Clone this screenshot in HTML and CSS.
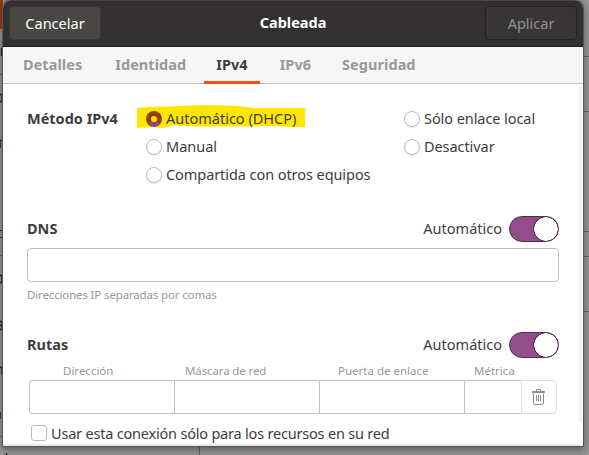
FILE: index.html
```html
<!DOCTYPE html>
<html lang="es">
<head>
<meta charset="utf-8">
<title>Cableada</title>
<link rel="stylesheet" href="styles.css">
</head>
<body>
<svg class="backdrop" width="589" height="455" viewBox="0 0 589 455" aria-hidden="true">
  <rect width="3" height="29" fill="#a23712"/>
  <path d="M0 74.500H3M0 255.500H3M0 436.500H199.500V455M583 56.500H589M583 111.500H589M583 231.500H589M583 256.500H589M583 311.500H589" fill="none" stroke="#666"/>
  <path d="M1.500 48v8M0 94.500h2v7H0M0 140.500h3M0 275.500h2v7H0M0 321.500h2v8H0M0 325.500h2M0 367.500h2v7M6.500 453v2" fill="none" stroke="#17202b" stroke-width="1.300"/>
  <path d="M0 142h1v6H0zM0 412h1v7H0z" fill="#0f4675"/>
  <path d="M2 183h1v10H2z" fill="#702407"/>
  <path d="M0 230h2v1H0zM0 237h2v1H0z" fill="#223a50"/>
</svg>
<main class="dialog">
  <header class="titlebar">
    <button class="btn cancel">Cancelar</button>
    <h1>Cableada</h1>
    <button class="btn apply">Aplicar</button>
  </header>
  <nav class="tabs">
    <a>Detalles</a><a>Identidad</a><a class="active">IPv4</a><a>IPv6</a><a>Seguridad</a>
  </nav>
  <div class="content">
    <section class="method">
      <h2>Método IPv4</h2>
      <div class="options">
        <label><svg class="marker" width="170" height="24" viewBox="0 0 170 24"><path d="M1 4Q15 2 32 2.500Q62 0 94 1.500Q107 2 117 4L169 4V23H153Q136 21.500 116 22.500L62 22.500L37 21.500L26 24Q13 22.500 1 24Z" fill="#ffe600"/></svg><i class="radio on"></i><span>Automático (DHCP)</span></label>
        <label><i class="radio"></i><span>Manual</span></label>
        <label><i class="radio"></i><span class="shared">Compartida con otros equipos</span></label>
      </div>
      <div class="options">
        <label><i class="radio"></i><span class="shared">Sólo enlace local</span></label>
        <label><i class="radio"></i><span class="shared">Desactivar</span></label>
      </div>
    </section>
    <section class="dns">
      <div class="section-head"><h2>DNS</h2><span>Automático</span><i class="switch"></i></div>
      <div class="entry"></div>
      <p class="hint">Direcciones IP separadas por comas</p>
    </section>
    <section class="routes">
      <div class="section-head"><h2>Rutas</h2><span>Automático</span><i class="switch"></i></div>
      <div class="columns"><span>Dirección</span><span class="mask">Máscara de red</span><span>Puerta de enlace</span><span>Métrica</span></div>
      <div class="route-row"><i></i><i></i><i></i><i></i><button class="delete" aria-label="Eliminar"><svg width="13" height="16" viewBox="0 0 13 16"><path d="M4.500 2V.5h4V2M.5 3.500V2.500h12v1z" fill="#8c8c8c" stroke="#8c8c8c"/><path d="M5 1.500h3" stroke="#fff"/><path d="M1.500 4.500V14a1.500 1.500 0 0 0 1.500 1.500h7a1.500 1.500 0 0 0 1.500-1.500V4.500M4.500 6v6M6.500 6v6M8.500 6v6" fill="none" stroke="#8c8c8c"/></svg></button></div>
      <label class="only"><i class="check"></i><span>Usar esta conexión sólo para los recursos en su red</span></label>
    </section>
    <i class="scroll-edge"></i>
  </div>
</main>
</body>
</html>
```
FILE: styles.css
```css
* { box-sizing: border-box; }
html, body { margin: 0; width: 589px; height: 455px; overflow: hidden; }
body {
  background: #979797;
  color: #3d3d3d;
  font: 14.5px/20px "Noto Sans", "Open Sans", sans-serif;
}
h1, h2, p { margin: 0; }
i { display: block; flex: none; }
span, h1, h2, a { white-space: nowrap; }
.backdrop { position: absolute; left: 0; top: 0; }
.dialog {
  position: relative;
  width: 580px;
  height: 446px;
  margin-left: 3px;
  background: #fff;
  border-radius: 8px 8px 0 0;
  box-shadow: 0 0 0 1px #565656, 0 3px 8px 1px rgba(0,0,0,.4);
}
.titlebar {
  display: grid;
  grid-template-columns: 92px 1fr 92px;
  align-items: start;
  height: 47px;
  padding: 5px 6px 0;
  background: #323030;
  border-top: 1px solid #454343;
  border-bottom: 1px solid #1d1b1b;
  border-radius: 8px 8px 0 0;
}
.titlebar h1 { margin-top: 6px; text-align: center; color: #fff; font-size: 14.5px; line-height: 20px; }
.btn { height: 34px; padding: 0 0 1px; border-radius: 4px; font: inherit; }
.cancel { border: 1px solid #393737; background: #484744; color: #fff; }
.apply { border: 1px solid #232121; background: #373535; color: #929190; }
.tabs {
  display: flex;
  gap: 22px;
  height: 37px;
  padding: 0 15px;
  background: #f6f6f6;
  border-bottom: 1px solid #c2c2c2;
  font-weight: 700;
  line-height: 34px;
  letter-spacing: .05px;
  color: #989898;
}
.tabs a { height: 37px; padding: 0 5px; }
.tabs a:first-child { padding-right: 6px; }
.tabs a:last-child { margin-left: -1px; }
.tabs .active { margin: 0 -7px 0 -9px; padding: 0 12px; color: #3d3d3d; border-bottom: 3px solid #e95420; }
.content { position: relative; height: 362px; padding: 21px 24px 0; border-bottom: 2px solid #ebebeb; }
h2 { font-size: 14.5px; line-height: 20px; }
.method { display: grid; grid-template-columns: 119px 258px 1fr; height: 111px; align-items: start; padding-top: 4px; }
.method h2 { margin-top: -1px; }
.options { display: grid; gap: 8px; }
.options label { position: relative; display: flex; align-items: center; gap: 4px; height: 20px; }
.options span { position: relative; padding-bottom: 2px; }
.shared { letter-spacing: -.07px; }
.marker { position: absolute; left: -10px; top: -5px; }
.radio { position: relative; width: 16px; height: 16px; border: 1px solid #bbb; border-radius: 50%; background: #fff; box-shadow: 0 1px 1px #eee; }
.radio.on { border: 5px solid #924300; border-bottom-color: #92457e; background: #ffe600; box-shadow: none; }
.section-head { display: grid; grid-template-columns: 1fr auto 50px; align-items: center; column-gap: 7px; height: 26px; }
.section-head h2, .section-head span { padding-bottom: 2px; }
.switch { width: 50px; height: 26px; border: 1px solid #542b52; border-radius: 13px; background: radial-gradient(circle at 36px 12px, #fff 11.500px, #542b52 12px, #542b52 12.500px, #924d8b 13px); }
.entry { height: 34px; margin-top: 6px; border: 1px solid #c0c0c0; border-radius: 4px; }
.hint { margin-top: 3px; color: #989898; font-size: 11.500px; letter-spacing: -.15px; }
.routes { margin-top: 27px; }
.columns { display: grid; grid-template-columns: 122px 153px 136px 60px; height: 22px; margin: 1px 0 0 36px; padding-top: 2px; color: #989898; font-size: 11.500px; line-height: 20px; }
.columns .mask { letter-spacing: -.12px; }
.route-row { display: grid; grid-template-columns: 145px 145px 145px 57px 36px; height: 34px; margin: -1px 0 0 2px; }
.route-row i { border: solid #c0c0c0; border-width: 1px 0 1px 1px; }
.route-row i:first-child { border-radius: 4px 0 0 4px; }
.delete { display: grid; place-items: center; padding: 0 2px 0 0; border: 1px solid #dedede; border-radius: 0 4px 4px 0; background: #fff; }
.only { display: flex; align-items: center; gap: 4px; height: 20px; margin: 9px 0 0 4px; letter-spacing: -.2px; }
.only span { padding-bottom: 1px; }
.check { width: 16px; height: 16px; border: 1px solid #bbb; border-radius: 3px; }
.scroll-edge { position: absolute; right: 1px; top: 3px; width: 3px; height: 335px; background: #f2f2f2; }
```
